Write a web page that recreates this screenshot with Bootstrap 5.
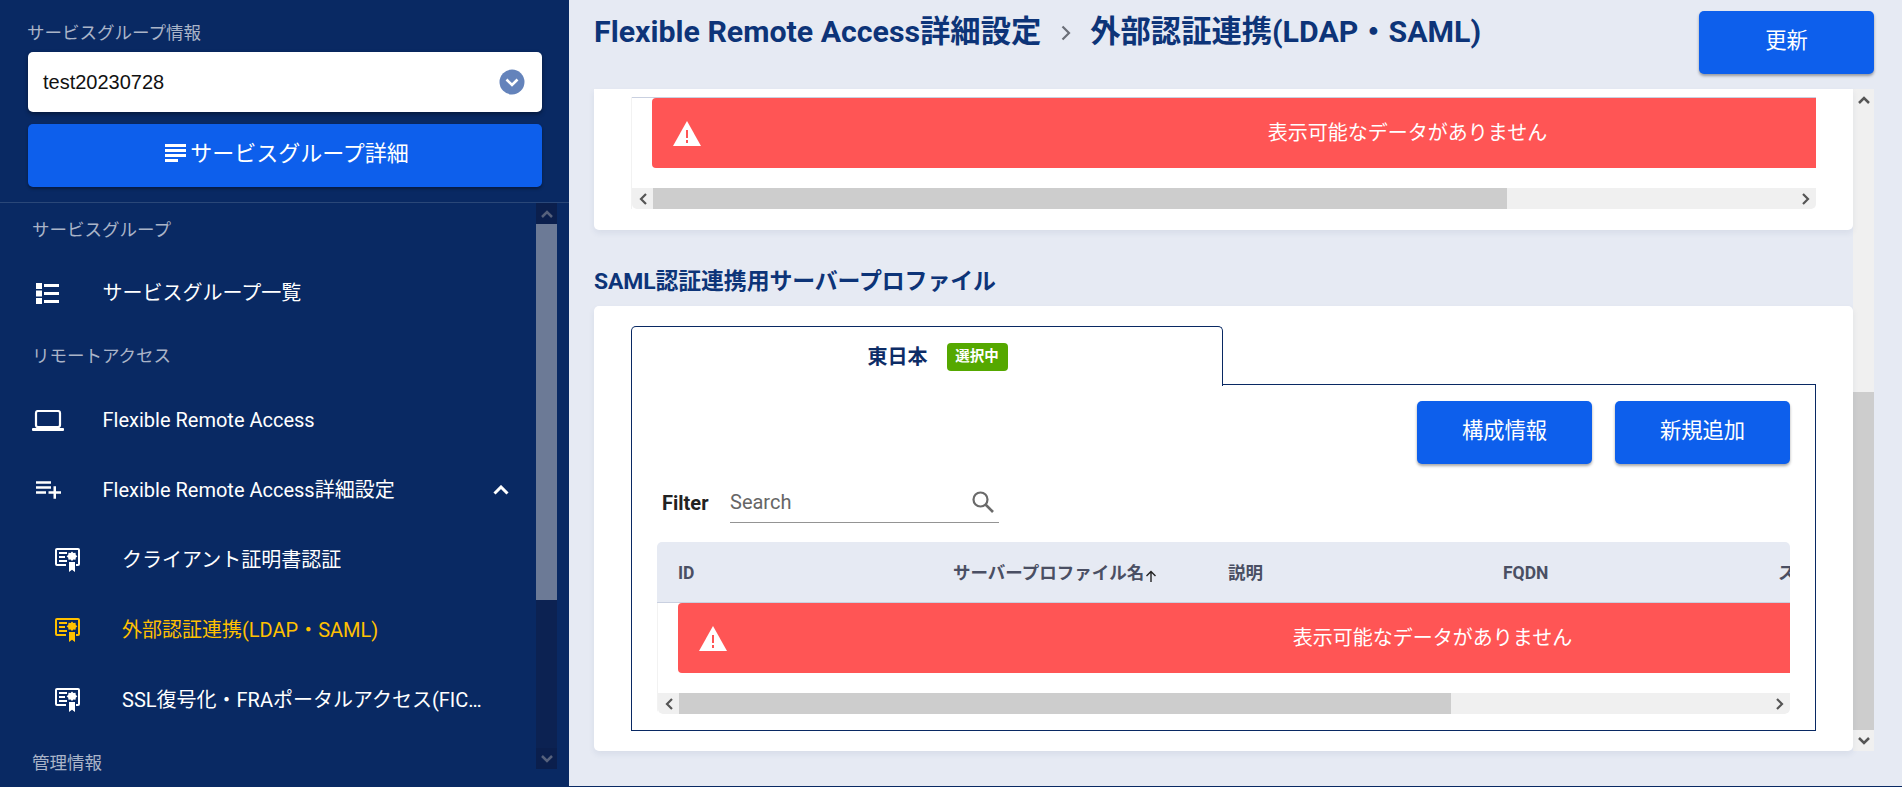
<!DOCTYPE html>
<html lang="ja">
<head>
<meta charset="utf-8">
<title>外部認証連携</title>
<link href="https://cdn.jsdelivr.net/npm/bootstrap@5.3.0/dist/css/bootstrap.min.css" rel="stylesheet">
<style>
html,body{height:787px;overflow:hidden;}
body{font-family:Roboto,"Noto Sans CJK JP",sans-serif;background:#e6eaf3;color:#222;}
.shell{height:787px;}
.side{width:569px;flex:none;background:#092963;color:#fff;height:787px;}
.side-top{height:203px;padding:23px 27px 0 28px;border-bottom:1px solid #2a4778;}
.side-cap{font-size:17.5px;line-height:20px;color:#aab4c8;margin-bottom:9px;margin-left:-1px;}
.pick{height:60px;background:#fff;border-radius:5px;color:#111;font-family:"Liberation Sans",Arial,sans-serif;font-size:20px;padding:0 17px 0 15px;box-shadow:0 2px 4px rgba(0,0,0,.4);margin-bottom:12px;}
.act{background:#0d5fec;border:0;border-radius:5px;color:#fff;font-size:21.3px;line-height:1;box-shadow:0 2px 3px rgba(0,0,0,.35);}
.act:hover{background:#0d5fec;color:#fff;}
.act-wide{width:100%;height:63px;padding:0 0 4px 4px;font-size:22px;}
.act-std{width:175px;height:63px;padding:0 0 3px;}
.side-body{height:575px;}
.side-list{flex:1;min-width:0;}
.sec{height:57px;padding-left:32px;font-size:17.5px;color:#aab4c8;}
.sec-a{height:55px;}
.sec-c{height:42px;align-items:flex-end;padding-bottom:1px;}
.itm{height:70px;color:#fff;font-size:20px;}
.ico-slot{width:102.5px;flex:none;padding-left:32px;}
.sub-slot{width:122px;flex:none;padding-left:55px;}
.itm-on{color:#ffc000;}
.itm-txt{white-space:nowrap;overflow:hidden;text-overflow:ellipsis;max-width:366px;}
.side-bar{width:21px;flex:none;margin:0 12px 9px auto;background:#0c2252;}
.sb-btn{height:21px;flex:none;}
.side-bar .sb-btn{background:#0b1f4d;}
.side-bar .sb-thumb{height:376px;background:#6c7a96;flex:none;}
.main{flex:1;min-width:0;height:787px;border-bottom:1px solid #092963;padding:0 28px 0 25px;}
.ttl-row{height:89px;}
.ttl{font-size:30.3px;font-weight:700;color:#0d3478;line-height:1;padding-top:17px;white-space:nowrap;}
.ttl-sep{margin:0 19px 0 20px;}
.upd{margin-top:11px;}
.scroller{height:662px;}
.scroll-col{width:1259px;flex:none;}
.sheet{background:#fff;border:0;border-radius:0 0 5px 5px;box-shadow:0 3px 6px rgba(40,60,110,.08);}
.sheet-a{height:141px;padding:8px 37px 0;}
.grid-a{border-left:1px solid #f2f2f2;}
.head-line{height:1px;background:#c9d0e0;}
.band{height:70px;background:#ff5555;color:#fff;font-size:20px;border-radius:4px 0 0 4px;display:grid;grid-template-columns:1fr auto 1fr;align-items:center;padding-left:21px;flex:none;}
.band-top{width:1490px;}
.band-low{width:1488px;}
.band-wrap{overflow:hidden;}
.band-wrap-top{padding-left:20px;}
.hbar{height:21px;background:#f0f0f0;border-radius:0 0 5px 5px;}
.hbtn{width:21px;flex:none;}
.hthumb{background:#cdcdcd;}
.sec-h{font-size:22.9px;font-weight:700;color:#0d3478;height:76px;padding-top:38px;line-height:28px;margin:0;letter-spacing:-.1px;white-space:nowrap;}
.sheet-b{height:445px;border-radius:5px;padding:20px 37px 19px 37px;}
.tab-head{height:59px;}
.tab-on{width:592px;height:60px;border:1px solid #092963;border-bottom:0;border-radius:5px 5px 0 0;background:#fff;color:#0d2c66;font-weight:700;font-size:20px;padding-left:21px;position:relative;z-index:1;}
.tab-fill{flex:1;border-bottom:1px solid #092963;}
.pick-tag{background:#55a800;color:#fff;font-size:14.5px;font-weight:700;width:61px;height:28px;border-radius:4px;margin-left:19px;}
.tab-body{height:346px;border:1px solid #092963;border-top:0;padding:16px 25px 15px 25px;}
.tool-row{gap:23px;height:63px;margin-bottom:17px;}
.flt{height:42px;margin-bottom:19px;padding-left:5px;}
.flt-lbl{font-size:20px;font-weight:700;width:68px;color:#222;line-height:1;padding-top:2px;}
.flt-box{width:269px;height:42px;border-bottom:1px solid #949494;padding-right:4px;}
.flt-in{border:0;outline:0;background:transparent;font-size:20px;width:230px;padding:0;color:#666;font-family:inherit;}
.flt-in::placeholder{color:#666;opacity:1;}
.prof-wrap{overflow:hidden;border-radius:5px;}
.prof-head{height:61px;background:#e6eaf3;border-bottom:1px solid #c9d0e0;padding-left:21px;font-size:17.5px;font-weight:700;color:#4a4f63;}
.prof-cell{width:275px;flex:none;white-space:nowrap;padding-top:2px;}
.sort-mark{margin-left:1px;vertical-align:-3px;}
.band-gap{height:20px;}
.prof-band{padding-left:20px;}
.prof-body{border-left:1px solid #f2f2f2;}
.v-bar{width:21px;flex:none;background:#f0f0f0;}
.v-thumb{background:#cdcdcd;height:338px;flex:none;}
.grow{flex:1;}
</style>
</head>
<body>
<div class="shell d-flex">
  <aside class="side d-flex flex-column">
    <div class="side-top">
      <div class="side-cap">サービスグループ情報</div>
      <div class="pick d-flex align-items-center justify-content-between">
        <span>test20230728</span>
        <svg width="26" height="26" viewBox="0 0 26 26"><circle cx="13" cy="13" r="12.5" fill="#6483bb"/><path d="M7.500 10.500 13 16l5.500-5.500" fill="none" stroke="#fff" stroke-width="2.600"/></svg>
      </div>
      <button type="button" class="btn act act-wide d-flex align-items-center justify-content-center gap-1">
        <svg width="21" height="19" viewBox="0 0 21 19"><path d="M0 1.500h21M0 6.500h21M0 11.500h21M0 16.500h13" stroke="#fff" stroke-width="3" fill="none"/></svg>
        <span>サービスグループ詳細</span>
      </button>
    </div>
    <div class="side-body d-flex">
      <nav class="side-list">
        <div class="sec sec-a d-flex align-items-center">サービスグループ</div>
        <a class="itm d-flex align-items-center text-decoration-none">
          <span class="ico-slot"><svg width="24" height="21" viewBox="0 0 24 21" fill="#fff" class="d-block ms-1"><rect width="6" height="6"/><rect y="7.500" width="6" height="6"/><rect y="15" width="6" height="6"/><rect x="8" y="1" width="15" height="3"/><rect x="8" y="9" width="15" height="3"/><rect x="8" y="17" width="15" height="3"/></svg></span>
          <span class="itm-txt">サービスグループ一覧</span>
        </a>
        <div class="sec d-flex align-items-center">リモートアクセス</div>
        <a class="itm d-flex align-items-center text-decoration-none">
          <span class="ico-slot"><svg width="32" height="21" viewBox="0 0 32 21" class="d-block"><rect x="4" y="1" width="24" height="16" rx="2" fill="none" stroke="#fff" stroke-width="2.200"/><rect y="18" width="32" height="3" rx="1" fill="#fff"/></svg></span>
          <span class="itm-txt">Flexible Remote Access</span>
        </a>
        <a class="itm d-flex align-items-center text-decoration-none position-relative">
          <span class="ico-slot"><svg width="25" height="18" viewBox="2 6 20 14" fill="#fff" class="d-block ms-1"><path d="M14 10H2v2h12v-2zm0-4H2v2h12V6zm4 8v-4h-2v4h-4v2h4v4h2v-4h4v-2h-4zM2 16h8v-2H2v2z"/></svg></span>
          <span class="itm-txt">Flexible Remote Access詳細設定</span>
          <svg class="ms-auto" width="16" height="10" viewBox="0 0 16 10" style="margin-right:27px"><path d="M1.500 8.500 8 2l6.500 6.500" fill="none" stroke="#fff" stroke-width="3"/></svg>
        </a>
        <a class="itm d-flex align-items-center text-decoration-none">
          <span class="sub-slot"><svg width="26" height="24" viewBox="0 0 26 24" class="d-block"><use href="#cert"/></svg></span>
          <span class="itm-txt">クライアント証明書認証</span>
        </a>
        <a class="itm itm-on d-flex align-items-center text-decoration-none">
          <span class="sub-slot"><svg width="26" height="24" viewBox="0 0 26 24" class="d-block"><use href="#cert"/></svg></span>
          <span class="itm-txt">外部認証連携(LDAP・SAML)</span>
        </a>
        <a class="itm d-flex align-items-center text-decoration-none">
          <span class="sub-slot"><svg width="26" height="24" viewBox="0 0 26 24" class="d-block"><use href="#cert"/></svg></span>
          <span class="itm-txt">SSL復号化・FRAポータルアクセス(FIC接続)</span>
        </a>
        <div class="sec sec-c d-flex">管理情報</div>
      </nav>
      <div class="side-bar d-flex flex-column">
        <div class="sb-btn d-flex align-items-center justify-content-center"><svg width="12" height="8" viewBox="0 0 12 8"><path d="M1 7 6 2l5 5" fill="none" stroke="#56617c" stroke-width="2.500"/></svg></div>
        <div class="sb-thumb"></div>
        <div class="grow"></div>
        <div class="sb-btn d-flex align-items-center justify-content-center"><svg width="12" height="8" viewBox="0 0 12 8"><path d="M1 1l5 5 5-5" fill="none" stroke="#56617c" stroke-width="2.500"/></svg></div>
      </div>
    </div>
  </aside>
  <main class="main">
    <div class="ttl-row d-flex justify-content-between align-items-start">
      <div class="ttl d-flex align-items-start">
        <span>Flexible Remote Access詳細設定</span>
        <svg class="ttl-sep" width="10" height="16" viewBox="0 0 10 16" style="margin-top:8px"><path d="M1.500 1.500 8 8l-6.500 6.500" fill="none" stroke="#6b6f78" stroke-width="2.200"/></svg>
        <span>外部認証連携(LDAP・SAML)</span>
      </div>
      <button type="button" class="btn act act-std upd">更新</button>
    </div>
    <div class="scroller d-flex">
      <div class="scroll-col">
        <div class="card sheet sheet-a">
          <div class="grid-a d-flex flex-column">
            <div class="head-line"></div>
            <div class="band-wrap band-wrap-top d-flex">
              <div class="band band-top">
                <svg width="28" height="25" viewBox="0 0 28 25"><path d="M14 0 28 25H0z" fill="#fff"/><path d="M14 9v8M14 19v3" stroke="#ff5555" stroke-width="2"/></svg>
                <span>表示可能なデータがありません</span>
                <span></span>
              </div>
            </div>
            <div class="band-gap"></div>
            <div class="hbar d-flex">
              <div class="hbtn d-flex align-items-center justify-content-center"><svg width="8" height="12" viewBox="0 0 8 12"><path d="M7 1 2 6l5 5" fill="none" stroke="#555" stroke-width="2.200"/></svg></div>
              <div class="hthumb" style="width:854px"></div>
              <div class="hbtn ms-auto d-flex align-items-center justify-content-center"><svg width="8" height="12" viewBox="0 0 8 12"><path d="M1 1l5 5-5 5" fill="none" stroke="#555" stroke-width="2.200"/></svg></div>
            </div>
          </div>
        </div>
        <h2 class="sec-h">SAML認証連携用サーバープロファイル</h2>
        <div class="card sheet sheet-b">
          <div class="tab-head d-flex">
            <div class="tab-on d-flex align-items-center justify-content-center">
              <span>東日本</span><span class="pick-tag d-flex align-items-center justify-content-center">選択中</span>
            </div>
            <div class="tab-fill"></div>
          </div>
          <div class="tab-body">
            <div class="tool-row d-flex justify-content-end">
              <button type="button" class="btn act act-std">構成情報</button>
              <button type="button" class="btn act act-std">新規追加</button>
            </div>
            <div class="flt d-flex align-items-center">
              <span class="flt-lbl">Filter</span>
              <div class="flt-box d-flex align-items-center justify-content-between">
                <input class="flt-in" type="text" placeholder="Search">
                <svg width="24" height="24" viewBox="0 0 24 24"><circle cx="9.500" cy="9.500" r="7" fill="none" stroke="#6a6a6a" stroke-width="2.200"/><path d="M14.500 14.500 22 22" stroke="#6a6a6a" stroke-width="2.600"/></svg>
              </div>
            </div>
            <div class="prof-wrap">
              <div class="prof-head d-flex align-items-center">
                <div class="prof-cell">ID</div>
                <div class="prof-cell">サーバープロファイル名<svg class="sort-mark" width="12" height="12" viewBox="0 0 12 12"><path d="M6 12V2M1.500 6 6 1.500 10.500 6" fill="none" stroke="#222" stroke-width="1.400"/></svg></div>
                <div class="prof-cell">説明</div>
                <div class="prof-cell">FQDN</div>
                <div class="prof-cell">ステータス</div>
              </div>
              <div class="prof-body">
                <div class="band-wrap prof-band d-flex">
                  <div class="band band-low">
                    <svg width="28" height="25" viewBox="0 0 28 25"><path d="M14 0 28 25H0z" fill="#fff"/><path d="M14 9v8M14 19v3" stroke="#ff5555" stroke-width="2"/></svg>
                    <span>表示可能なデータがありません</span>
                    <span></span>
                  </div>
                </div>
                <div class="band-gap"></div>
                <div class="hbar d-flex">
                  <div class="hbtn d-flex align-items-center justify-content-center"><svg width="8" height="12" viewBox="0 0 8 12"><path d="M7 1 2 6l5 5" fill="none" stroke="#555" stroke-width="2.200"/></svg></div>
                  <div class="hthumb" style="width:772px"></div>
                  <div class="hbtn ms-auto d-flex align-items-center justify-content-center"><svg width="8" height="12" viewBox="0 0 8 12"><path d="M1 1l5 5-5 5" fill="none" stroke="#555" stroke-width="2.200"/></svg></div>
                </div>
              </div>
            </div>
          </div>
        </div>
      </div>
      <div class="v-bar d-flex flex-column">
        <div class="sb-btn d-flex align-items-center justify-content-center"><svg width="12" height="8" viewBox="0 0 12 8"><path d="M1 7 6 2l5 5" fill="none" stroke="#555" stroke-width="2.500"/></svg></div>
        <div class="grow"></div>
        <div class="v-thumb"></div>
        <div class="sb-btn d-flex align-items-center justify-content-center"><svg width="12" height="8" viewBox="0 0 12 8"><path d="M1 1l5 5 5-5" fill="none" stroke="#555" stroke-width="2.500"/></svg></div>
      </div>
    </div>
  </main>
</div>
<svg width="0" height="0" class="position-absolute">
  <symbol id="cert" viewBox="0 0 26 24">
    <path d="M11 17H2a1 1 0 0 1-1-1V2a1 1 0 0 1 1-1h21a1 1 0 0 1 1 1v14a1 1 0 0 1-1 1h-2" fill="none" stroke="currentColor" stroke-width="2"/>
    <path d="M4 4h8v2H4zM4 8h6v2H4zM4 12h8v2H4z" fill="currentColor"/>
    <path d="M17 3.500l1.400 1.600 2.100-.3.300 2.100 1.600 1.400-1.600 1.400-.3 2.100-2.100-.3L17 13.100l-1.400-1.600-2.100.3-.3-2.100-1.600-1.400 1.600-1.400.3-2.100 2.100.3z" fill="currentColor"/>
    <path d="M14 14v10l3-2.200 3 2.200V14z" fill="currentColor"/>
  </symbol>
</svg>
<script src="https://cdn.jsdelivr.net/npm/bootstrap@5.3.0/dist/js/bootstrap.bundle.min.js"></script>
</body>
</html>
